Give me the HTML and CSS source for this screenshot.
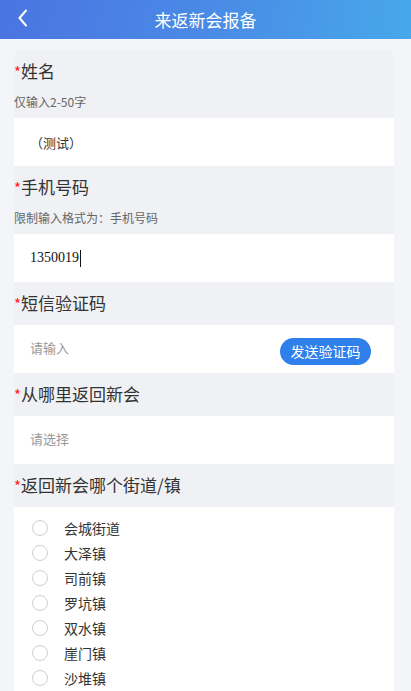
FILE: index.html
```html
<!DOCTYPE html>
<html lang="zh-CN">
<head>
    <meta charset="UTF-8">
    <meta name="viewport" content="width=device-width, initial-scale=1.0">
    <title>来返新会报备</title>
    <link rel="stylesheet" href="styles.css">
</head>
<body>
    <header class="top-bar">
        <a class="back" href="#">
            <svg width="12" height="18" viewBox="0 0 12 18"><path d="M9 1.5 L2.5 9 L9 16.5" fill="none" stroke="#fff" stroke-width="2" stroke-linecap="round" stroke-linejoin="round"/></svg>
        </a>
        <h1>来返新会报备</h1>
    </header>

    <div class="form-card">
        <div class="field">
            <div class="label"><span class="req">*</span>姓名</div>
            <div class="hint">仅输入2-50字</div>
            <div class="input-box"><span class="value">（测试）</span></div>
        </div>

        <div class="field">
            <div class="label"><span class="req">*</span>手机号码</div>
            <div class="hint">限制输入格式为：手机号码</div>
            <div class="input-box"><span class="value num">1350019</span><span class="caret"></span></div>
        </div>

        <div class="field">
            <div class="label"><span class="req">*</span>短信验证码</div>
            <div class="input-box split">
                <span class="placeholder">请输入</span>
                <button type="button" class="send-btn">发送验证码</button>
            </div>
        </div>

        <div class="field">
            <div class="label"><span class="req">*</span>从哪里返回新会</div>
            <div class="input-box"><span class="placeholder">请选择</span></div>
        </div>

        <div class="field">
            <div class="label"><span class="req">*</span>返回新会哪个街道/镇</div>
            <ul class="radio-list">
                <li><span class="radio"></span>会城街道</li>
                <li><span class="radio"></span>大泽镇</li>
                <li><span class="radio"></span>司前镇</li>
                <li><span class="radio"></span>罗坑镇</li>
                <li><span class="radio"></span>双水镇</li>
                <li><span class="radio"></span>崖门镇</li>
                <li><span class="radio"></span>沙堆镇</li>
            </ul>
        </div>
    </div>
</body>
</html>
```

FILE: styles.css
```css
body {
    margin: 0;
    padding: 0;
    background-color: #f4f5f9;
    color: #333;
    font-family: "Noto Sans CJK SC", "Liberation Sans", sans-serif;
    overflow: hidden;
}
.top-bar {
    height: 39px;
    background: linear-gradient(100deg, #4a74e1 0%, #4a8ae6 50%, #47a8ea 100%);
    display: flex;
    align-items: center;
    justify-content: center;
    position: relative;
}
.top-bar h1 {
    margin: 0;
    font-size: 17px;
    font-weight: normal;
    color: #fff;
    line-height: 39px;
}
.back {
    position: absolute;
    left: 17px;
    top: 9px;
    display: block;
    width: 12px;
    height: 18px;
}
.back svg {
    display: block;
}
.form-card {
    margin: 11px 17px 0 14px;
    background-color: #f0f1f4;
    border-radius: 6px 6px 0 0;
}
.label {
    font-size: 17px;
    line-height: 24px;
    padding: 9px 0;
    color: #333;
}
.req {
    color: #f22;
    font-size: 15px;
}
.hint {
    font-size: 12px;
    line-height: 20px;
    color: #666;
    padding-bottom: 6px;
    margin-top: -1px;
}
.input-box {
    height: 48px;
    background-color: #fff;
    display: flex;
    align-items: center;
    padding: 0 16px;
    font-size: 13px;
}
.input-box.split {
    justify-content: space-between;
    padding-right: 23px;
}
.value {
    color: #333;
}
.value.num {
    font-family: "Liberation Serif", serif;
    font-size: 14px;
    color: #111;
}
.caret {
    display: inline-block;
    width: 1px;
    height: 17px;
    background-color: #111;
    margin-left: 1px;
}
.placeholder {
    color: #999;
    margin-top: -3px;
}
.send-btn {
    height: 27px;
    width: 91px;
    border: none;
    border-radius: 14px;
    background-color: #2f80ea;
    color: #fff;
    font-family: inherit;
    font-size: 14px;
    padding: 0;
    margin-top: 4px;
}
.radio-list {
    list-style: none;
    margin: 0;
    padding: 8px 0 0 18px;
    background-color: #fff;
    height: 200px;
}
.radio-list li {
    display: flex;
    align-items: center;
    height: 25px;
    font-size: 14px;
    color: #333;
}
.radio {
    width: 14px;
    height: 14px;
    border: 1.5px solid #cfcfcf;
    border-radius: 50%;
    margin-right: 16px;
    flex-shrink: 0;
}
```
